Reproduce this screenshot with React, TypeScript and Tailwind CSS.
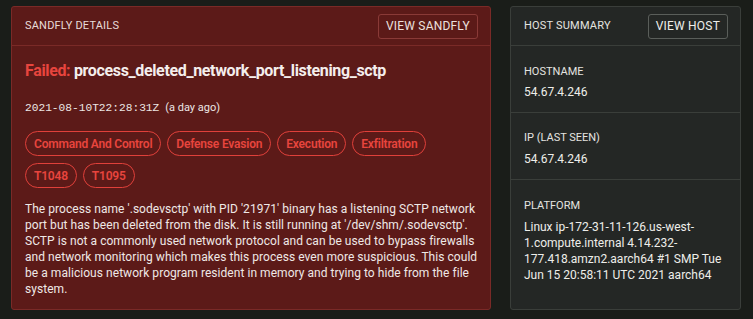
import React from "react";

const font = { fontFamily: '"Roboto", "Noto Sans", sans-serif' };

function Tag({ children }: { children: React.ReactNode }) {
  return (
    <span className="inline-flex items-center h-[25px] px-[8px] rounded-full border border-[#e0403a] text-[#e8453e] text-[12px] font-semibold leading-none tracking-[-0.2px]">
      {children}
    </span>
  );
}

export default function App() {
  return (
    <div
      className="w-[753px] h-[319px] bg-[#1a1d19] pt-[6px] pl-[11px] flex gap-[19px] text-[#ece6e4]"
      style={font}
    >
      <div className="w-[480px] h-[304px] rounded-[3px] border border-[#7a2a27] bg-[#5c1a18] flex flex-col">
        <div className="h-[39px] shrink-0 flex items-center justify-between pl-[13px] pr-[12px] border-b border-[#7a2a27]">
          <span className="text-[11px] tracking-[0.2px] text-[#e8dcda]">SANDFLY DETAILS</span>
          <button className="h-[25px] px-[7px] rounded-[3px] border border-[#8a3a37] text-[12px] text-[#ece0de] tracking-[0.2px]">
            VIEW SANDFLY
          </button>
        </div>
        <div className="pl-[13px] pr-[10px] pt-[14px]">
          <div className="text-[16px] font-bold leading-[22px] tracking-[-0.35px]">
            <span className="text-[#e8453e]">Failed:</span>{" "}
            <span className="text-[#f4eeec]">process_deleted_network_port_listening_sctp</span>
          </div>
          <div className="mt-[18px] text-[12px] leading-[16px] flex items-baseline gap-[6px]">
            <span style={{ fontFamily: '"Liberation Mono", monospace' }} className="text-[11.2px]">
              2021-08-10T22:28:31Z
            </span>
            <span className="text-[11px]">(a day ago)</span>
          </div>
          <div className="mt-[15px] flex flex-wrap gap-x-[6px] gap-y-[7px]">
            <Tag>Command And Control</Tag>
            <Tag>Defense Evasion</Tag>
            <Tag>Execution</Tag>
            <Tag>Exfiltration</Tag>
            <Tag>T1048</Tag>
            <Tag>T1095</Tag>
          </div>
          <p className="mt-[13px] text-[12px] leading-[16px] text-[#efe8e6] tracking-[0.05px]">
            The process name '.sodevsctp' with PID '21971' binary has a listening SCTP network port but has been deleted from the disk. It is still running at '/dev/shm/.sodevsctp'. SCTP is not a commonly used network protocol and can be used to bypass firewalls and network monitoring which makes this process even more suspicious. This could be a malicious network program resident in memory and trying to hide from the file system.
          </p>
        </div>
      </div>

      <div className="w-[231px] h-[304px] rounded-[3px] border border-[#3a3e3a] bg-[#242725] flex flex-col">
        <div className="h-[39px] shrink-0 flex items-center justify-between pl-[13px] pr-[12px] border-b border-[#3a3e3a]">
          <span className="text-[11px] tracking-[0.2px] text-[#e4e4e0]">HOST SUMMARY</span>
          <button className="h-[25px] px-[7px] rounded-[3px] border border-[#5a5e5a] text-[12px] text-[#eeeeea] tracking-[0.2px]">
            VIEW HOST
          </button>
        </div>
        <div className="h-[67px] shrink-0 border-b border-[#3a3e3a] px-[13px] pt-[18px]">
          <div className="text-[11px] leading-[16px] text-[#e4e4e0]">HOSTNAME</div>
          <div className="mt-[4px] text-[12px] leading-[16px] text-[#eeeeea]">54.67.4.246</div>
        </div>
        <div className="h-[67px] shrink-0 border-b border-[#3a3e3a] px-[13px] pt-[17px]">
          <div className="text-[11px] leading-[16px] text-[#e4e4e0]">IP (LAST SEEN)</div>
          <div className="mt-[5px] text-[12px] leading-[16px] text-[#eeeeea]">54.67.4.246</div>
        </div>
        <div className="px-[13px] pt-[18px]">
          <div className="text-[11px] leading-[16px] text-[#e4e4e0]">PLATFORM</div>
          <div className="mt-[5px] text-[12px] leading-[16px] text-[#eeeeea]">
            Linux ip-172-31-11-126.us-west-1.compute.internal 4.14.232-177.418.amzn2.aarch64 #1 SMP Tue Jun 15 20:58:11 UTC 2021 aarch64
          </div>
        </div>
      </div>
    </div>
  );
}
